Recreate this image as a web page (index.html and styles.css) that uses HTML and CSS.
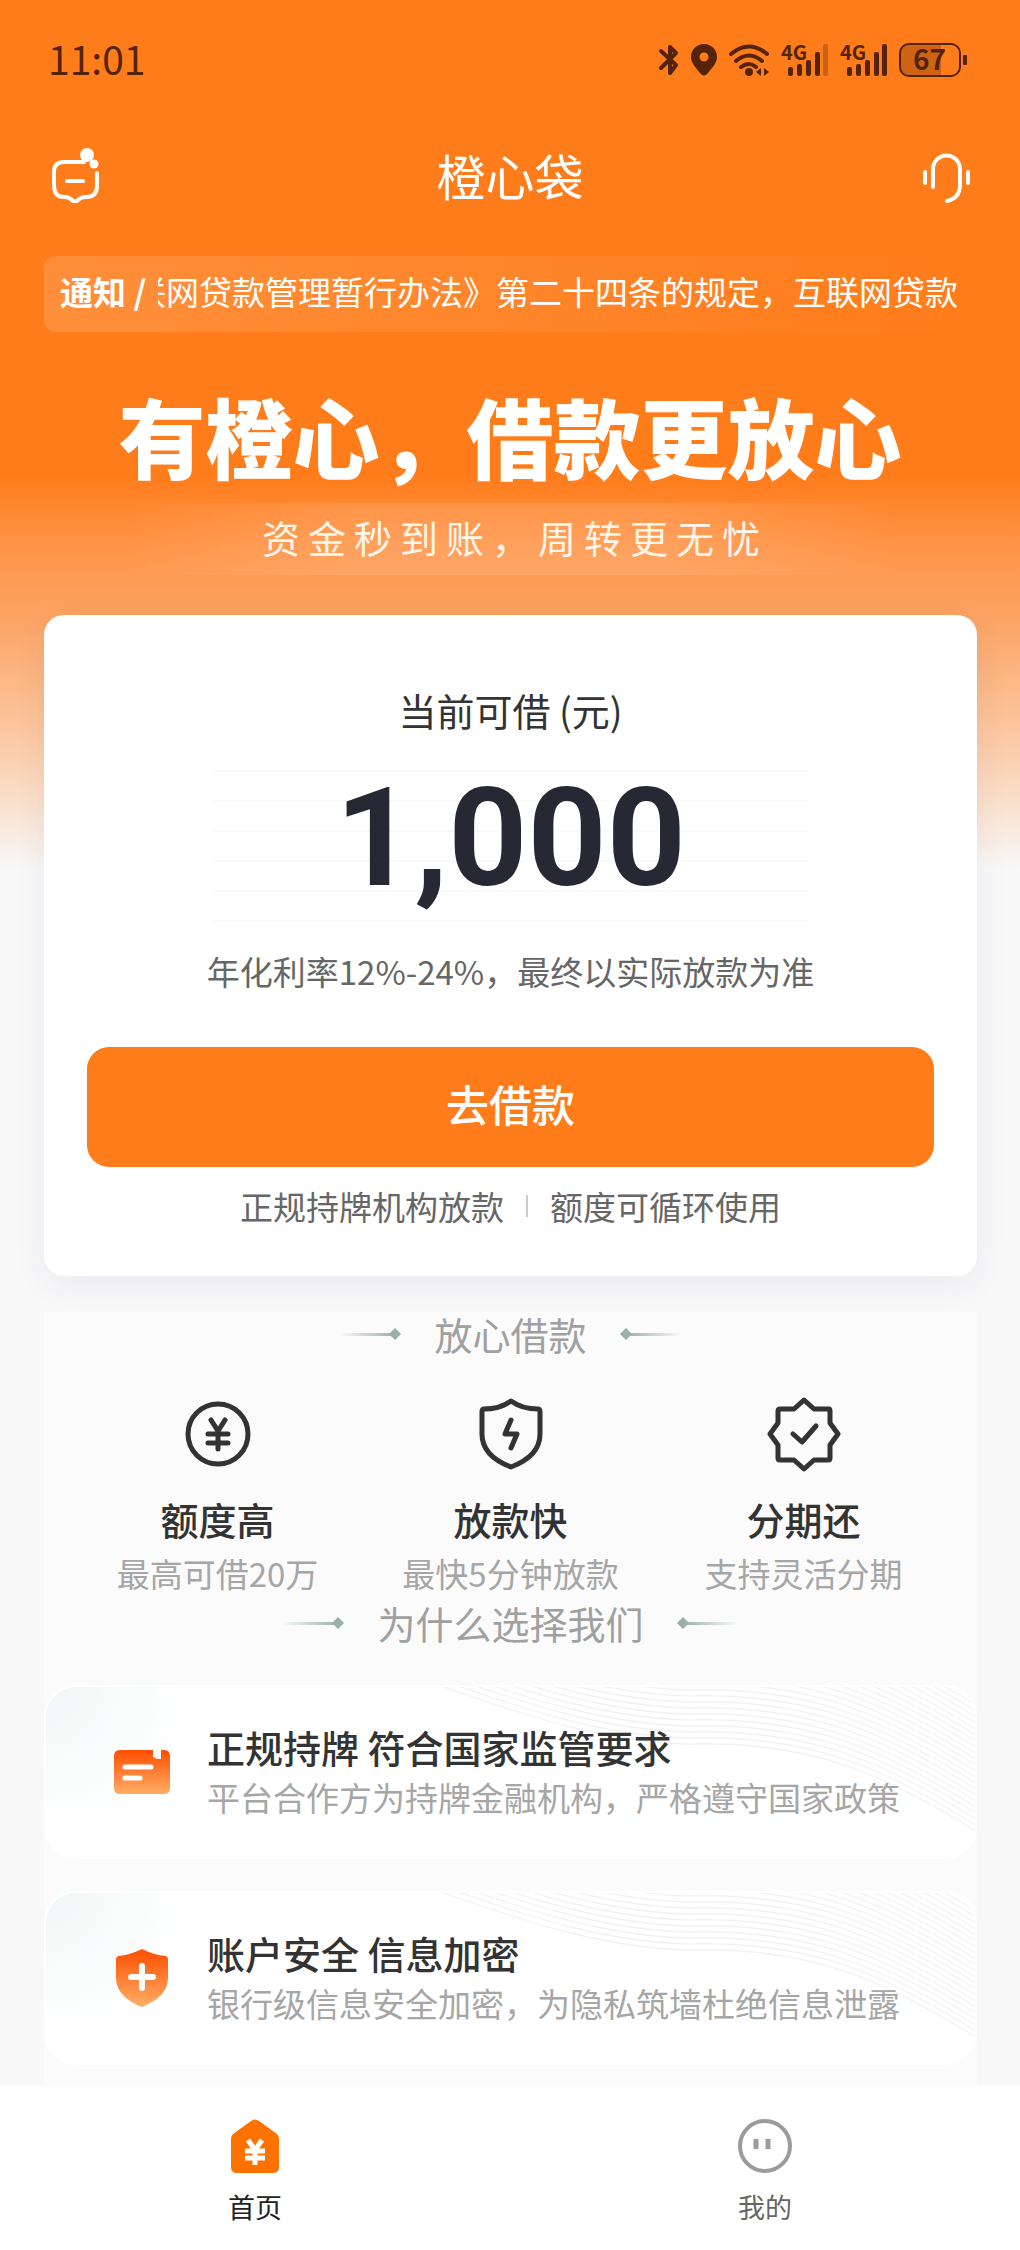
FILE: index.html
```html
<!DOCTYPE html>
<html lang="zh-CN">
<head>
<meta charset="utf-8">
<meta name="viewport" content="width=device-width, initial-scale=1">
<title>橙心袋</title>
<link rel="stylesheet" href="styles.css">
</head>
<body>
<svg class="defs" aria-hidden="true">
  <defs>
    <linearGradient id="flame" x1="0" y1="0" x2="0" y2="1">
      <stop offset="0" stop-color="#ff4e00"/>
      <stop offset="1" stop-color="#ffae66"/>
    </linearGradient>
    <linearGradient id="fade" x1="0" y1="0" x2="1" y2="0">
      <stop offset="0" stop-color="#9ab0aa" stop-opacity="0"/>
      <stop offset="1" stop-color="#9ab0aa"/>
    </linearGradient>
    <symbol id="pointer" viewBox="0 0 62 12">
      <rect x="0" y="5" width="56" height="3" fill="url(#fade)"/>
      <path d="M56 0l6 6-6 6-6-6z" fill="#9ab0aa"/>
    </symbol>
    <path id="wave" d="M-25 0C50 26 130 55 220 57C340 54 410 84 510 146"/>
    <g id="waves4">
      <use href="#wave"/><use href="#wave" y="-6"/><use href="#wave" y="-12"/><use href="#wave" y="-18"/>
    </g>
    <symbol id="waves" viewBox="-30 0 536 174">
      <g fill="none" stroke="#f1f2f2" stroke-width="1.4">
        <use href="#waves4"/><use href="#waves4" y="-24"/><use href="#waves4" y="-48"/>
        <use href="#waves4" y="-72"/><use href="#waves4" y="-96"/><use href="#waves4" y="-120"/>
      </g>
    </symbol>
  </defs>
</svg>
<div class="page">
  <div class="status">
    <span class="clock">11:01</span>
    <div class="signals">
      <svg width="22" height="34" viewBox="0 0 22 34" fill="none" stroke="#54230a" stroke-width="4" stroke-linejoin="round" stroke-linecap="round"><path d="M3 8l15 14-6 8V4l6 6L3 25"/></svg>
      <svg width="26" height="34" viewBox="0 0 26 34"><path fill="#54230a" fill-rule="evenodd" d="M13 1a13 13 0 0 1 13 13c0 6-5 11-9 16q-4 5-8 0C5 25 0 20 0 14A13 13 0 0 1 13 1zm0 8.500a4.500 4.500 0 1 0 0 9 4.500 4.500 0 0 0 0-9z"/></svg>
      <svg width="42" height="34" viewBox="0 0 42 34"><g fill="none" stroke="#54230a" stroke-width="4" stroke-linecap="round"><path d="M3 11q18-15 36 0M8 18q13-11 26 0M13 24q8-6 15 0"/></g><circle cx="21" cy="29" r="4" fill="#54230a"/><path fill="#54230a" d="M33 25v8l-5-4zM36 25v8l5-4z"/></svg>
      <svg width="48" height="34" viewBox="0 0 48 34" fill="#54230a"><text x="0" y="17" class="net">4G</text><rect x="7" y="24" width="5" height="9" rx="2"/><rect x="16" y="21" width="5" height="12" rx="2"/><rect x="25" y="17" width="5" height="16" rx="2"/><rect x="34" y="9" width="5" height="24" rx="2"/><rect x="42" y="1" width="5" height="32" rx="2" opacity=".3"/></svg>
      <svg width="48" height="34" viewBox="0 0 48 34" fill="#54230a"><text x="0" y="17" class="net">4G</text><rect x="7" y="24" width="5" height="9" rx="2"/><rect x="16" y="21" width="5" height="12" rx="2"/><rect x="25" y="17" width="5" height="16" rx="2"/><rect x="34" y="9" width="5" height="24" rx="2"/><rect x="42" y="1" width="5" height="32" rx="2"/></svg>
      <svg width="69" height="34" viewBox="0 0 69 34" fill="#54230a"><path d="M10 2h32v30H10q-8 0-8-8V10q0-8 8-8z" opacity=".28"/><rect x="1" y="1" width="60" height="32" rx="9" fill="none" stroke="#54230a" stroke-width="2"/><rect x="64" y="12" width="4" height="10" rx="1"/><text x="14" y="27" class="charge">67</text></svg>
    </div>
  </div>

  <header class="nav">
    <button class="icon-button" type="button" aria-label="消息">
      <svg width="50" height="56" viewBox="0 0 50 56"><path fill="none" stroke="#fff" stroke-width="4" stroke-linecap="round" stroke-linejoin="round" d="M35 15H15Q5 15 5 25v13q0 12 10 12 5 0 8 3 3 3 6 0 3-3 8-3 11 0 11-11V26"/><path stroke="#fff" stroke-width="4" stroke-linecap="round" d="M18 34h16"/><circle cx="38" cy="8" r="7" fill="#fff"/><circle cx="45" cy="17" r="4.500" fill="#fff"/></svg>
    </button>
    <h1 class="title">橙心袋</h1>
    <button class="icon-button" type="button" aria-label="客服">
      <svg width="50" height="56" viewBox="0 -6 50 56" fill="none" stroke="#fff" stroke-width="4" stroke-linecap="round"><path d="M12 34V16a13.500 13.500 0 0 1 27 0v16q0 13-13 16"/><path d="M4 19v11M47 19v11"/></svg>
    </button>
  </header>

  <section class="notice">
    <strong class="notice-tag">通知 /</strong>
    <div class="marquee"><span>联网贷款管理暂行办法》第二十四条的规定，互联网贷款</span></div>
  </section>

  <h2 class="slogan">有橙心，借款更放心</h2>
  <p class="subslogan">资金秒到账，周转更无忧</p>

  <main class="content">
    <section class="card">
      <p class="card-title">当前可借 (元)</p>
      <div class="amount">1,000</div>
      <p class="rate">年化利率12%-24%，最终以实际放款为准</p>
      <button class="borrow" type="button">去借款</button>
      <p class="facts"><span>正规持牌机构放款</span><i class="bar"></i><span>额度可循环使用</span></p>
    </section>

    <div class="panel">
      <h3 class="section-title"><svg class="pointer"><use href="#pointer"/></svg>放心借款<svg class="pointer flip"><use href="#pointer"/></svg></h3>
      <ul class="features">
        <li>
          <svg width="76" height="76" viewBox="0 0 76 76" fill="none" stroke="#333" stroke-width="5" stroke-linecap="round"><circle cx="38" cy="38" r="30"/><path d="M31 24l7 11 7-11M38 35v18M28 38h20M28 47h20"/></svg>
          <b>额度高</b><span>最高可借20万</span>
        </li>
        <li>
          <svg width="76" height="76" viewBox="0 0 76 76" fill="none" stroke="#333" stroke-width="5" stroke-linecap="round" stroke-linejoin="round"><path d="M38 5q11 8 27 8 2 0 2 3v22q0 22-29 33Q9 60 9 38V16q0-3 2-3 16 0 27-8z"/><path d="M38 24l-6 14h12l-6 14"/></svg>
          <b>放款快</b><span>最快5分钟放款</span>
        </li>
        <li>
          <svg width="76" height="76" viewBox="0 0 76 76" fill="none" stroke="#333" stroke-width="5" stroke-linecap="round" stroke-linejoin="round"><path d="M38 4l10 9 15 0q1 0 1 2v12l8 11-8 11v13q0 2-2 2H48l-10 9-10-9H14q-2 0-2-2V49L4 38l8-11V15q0-2 2-2h14z"/><path d="M27 38l9 8 14-16"/></svg>
          <b>分期还</b><span>支持灵活分期</span>
        </li>
      </ul>
      <h3 class="section-title"><svg class="pointer"><use href="#pointer"/></svg>为什么选择我们<svg class="pointer flip"><use href="#pointer"/></svg></h3>
      <div class="reasons">
        <article class="reason">
          <svg class="waves"><use href="#waves"/></svg>
          <svg class="reason-icon" width="56" height="58" viewBox="0 0 56 58"><path fill="url(#flame)" d="M6 7h33v7l4 2 4 0V7h3q6 0 6 6v32q0 6-6 6H6q-6 0-6-6V13q0-6 6-6z"/><path stroke="#fff" stroke-width="5" stroke-linecap="round" d="M11 24h26M11 35h15"/></svg>
          <div><h4>正规持牌 符合国家监管要求</h4><p>平台合作方为持牌金融机构，严格遵守国家政策</p></div>
        </article>
        <article class="reason">
          <svg class="waves"><use href="#waves"/></svg>
          <svg class="reason-icon" width="56" height="58" viewBox="0 0 56 58"><path fill="url(#flame)" d="M28 0q12 6 24 7 2 1 2 3v18c0 17-14 25-26 30C16 53 2 45 2 28V10q0-2 2-3 12-1 24-7z"/><path stroke="#fff" stroke-width="6" stroke-linecap="round" d="M28 17v22M17 28h22"/></svg>
          <div><h4>账户安全 信息加密</h4><p>银行级信息安全加密，为隐私筑墙杜绝信息泄露</p></div>
        </article>
      </div>
    </div>
  </main>

  <nav class="tabs">
    <a class="tab active" href="#home">
      <svg width="54" height="54" viewBox="0 0 54 54"><path fill="#ff7200" d="M23 2q4-3 8 0l18 13q2 2 2 5v28q0 6-6 6H9q-6 0-6-6V20q0-3 2-5z"/><path fill="none" stroke="#fff" stroke-width="5" d="M20 21l7 10 7-10M27 30v16M17 32h20M17 39h20"/></svg>
      首页
    </a>
    <a class="tab" href="#mine">
      <svg width="54" height="54" viewBox="0 0 54 54"><circle cx="27" cy="27" r="25" fill="none" stroke="#9b9b9b" stroke-width="4"/><path stroke="#9b9b9b" stroke-width="5" d="M18 20v10M30 20v10"/></svg>
      我的
    </a>
  </nav>
</div>
</body>
</html>
```
FILE: styles.css
```css
* { box-sizing: border-box; }

body {
  margin: 0;
  background: #f8f8f9;
  font-family: "Noto Sans CJK SC", "Noto Sans", sans-serif;
  color: #333;
}

h1, h2, h3, h4, p, ul { margin: 0; padding: 0; font-weight: 400; }
ul { list-style: none; }
button { border: 0; padding: 0; background: none; font: inherit; color: inherit; cursor: pointer; }
svg { display: block; }
.defs { position: absolute; width: 0; height: 0; }

.page {
  min-height: 100vh;
  display: flex;
  flex-direction: column;
  background: linear-gradient(#ff7c1a 0, #ff7c1a 475px, #ff9244 540px, #fca464 620px, #fbcdaa 750px, #f8f8f9 870px);
}

/* status bar */
.status {
  height: 120px;
  padding: 0 52px 0 48px;
  display: flex;
  align-items: center;
  justify-content: space-between;
  color: #54230a;
}
.clock { padding-bottom: 4px; font-size: 39px; line-height: 48px; }
.signals { display: flex; align-items: center; gap: 11px; }
.signals svg { overflow: visible; }
.net { font: 700 20px "Noto Sans CJK SC", sans-serif; }
.charge { font: 700 28px "Noto Sans CJK SC", sans-serif; }

/* title bar */
.nav {
  height: 110px;
  padding: 0 49px;
  display: flex;
  align-items: center;
  justify-content: space-between;
  color: #fff;
}
.title { font-size: 49px; line-height: 64px; }

.notice {
  height: 76px;
  margin: 26px 44px 0;
  padding: 0 18px 6px 16px;
  display: flex;
  align-items: center;
  gap: 12px;
  border-radius: 12px;
  background: linear-gradient(90deg, rgba(255, 255, 255, .14), rgba(255, 255, 255, 0));
  color: #fff;
  font-size: 33px;
  line-height: 44px;
}
.notice-tag { flex: none; font-weight: 700; }
.marquee {
  flex: 1;
  min-width: 0;
  display: flex;
  justify-content: flex-end;
  overflow: hidden;
  white-space: nowrap;
}

/* hero */
.slogan {
  margin-top: 48px;
  color: #fff;
  font-size: 87px;
  font-weight: 900;
  line-height: 110px;
  text-align: center;
}
.subslogan {
  margin: 13px 120px 0;
  padding: 0 0 4px 10px;
  background: linear-gradient(90deg, rgba(255, 255, 255, 0), rgba(255, 255, 255, .12) 30%, rgba(255, 255, 255, .12) 70%, rgba(255, 255, 255, 0));
  color: #fff5e8;
  font-size: 38px;
  letter-spacing: 8px;
  line-height: 68px;
  text-align: center;
}

.content { flex: 1; padding: 40px 43px 0 44px; }

/* loan card */
.card {
  padding: 68px 43px 46px;
  display: flex;
  flex-direction: column;
  align-items: center;
  border-radius: 20px;
  background: #fff;
  box-shadow: 0 8px 32px rgba(60, 60, 110, .07);
}
.card-title { font-size: 38px; line-height: 54px; }
.amount {
  width: 596px;
  height: 152px;
  margin-top: 33px;
  background: repeating-linear-gradient(#fafafa 0, #fafafa 2px, #fff 2px, #fff 30px);
  color: #262833;
  font-family: Roboto, sans-serif;
  font-size: 138px;
  font-weight: 700;
  line-height: 136px;
  text-align: center;
}
.rate { margin-top: 25px; color: #666; font-size: 33px; line-height: 48px; }
.borrow {
  width: 100%;
  height: 120px;
  margin-top: 52px;
  padding-bottom: 8px;
  border-radius: 22px;
  background: #ff7c1a;
  color: #fff;
  font-size: 43px;
  font-weight: 500;
}
.facts {
  margin-top: 15px;
  display: flex;
  align-items: center;
  gap: 22px;
  color: #666;
  font-size: 33px;
  line-height: 48px;
}
.bar { width: 2px; height: 22px; background: #ccc; }

/* selling points */
.panel { margin-top: 36px; padding-bottom: 21px; background: #fbfbfb; }
.section-title {
  display: flex;
  align-items: center;
  justify-content: center;
  gap: 33px;
  color: #a0a0a0;
  font-size: 38px;
  line-height: 44px;
}
.pointer { width: 62px; height: 12px; }
.flip { transform: scaleX(-1); }

.features {
  margin: 40px 27px 6px;
  display: grid;
  grid-template-columns: repeat(3, 1fr);
}
.features li { display: flex; flex-direction: column; align-items: center; }
.features b { margin-top: 20px; font-size: 38px; font-weight: 500; line-height: 54px; }
.features span { margin-top: 5px; color: #a6a6a6; font-size: 33px; line-height: 44px; }

.reasons { margin-top: 40px; display: grid; gap: 32px; }
.reason {
  position: relative;
  overflow: hidden;
  padding: 38px 68px;
  display: flex;
  align-items: center;
  gap: 37px;
  border: 2px solid #fff;
  border-radius: 32px;
  background: radial-gradient(circle at 0 0, #f0f7f6, #fff 140px);
}
.waves { position: absolute; top: 0; right: 0; width: 536px; height: 174px; }
.reason-icon { flex: none; }
.reason div { position: relative; }
.reason h4 { font-size: 38px; font-weight: 500; line-height: 44px; }
.reason p { margin-top: 6px; color: #a6a6a6; font-size: 33px; line-height: 44px; white-space: nowrap; }

/* bottom tabs */
.tabs { display: flex; background: #fff; }
.tab {
  flex: 1;
  padding: 33px 0 25px;
  display: flex;
  flex-direction: column;
  align-items: center;
  gap: 16px;
  color: #666;
  font-size: 27px;
  line-height: 36px;
  text-decoration: none;
}
.tab.active { color: #222; }
```
